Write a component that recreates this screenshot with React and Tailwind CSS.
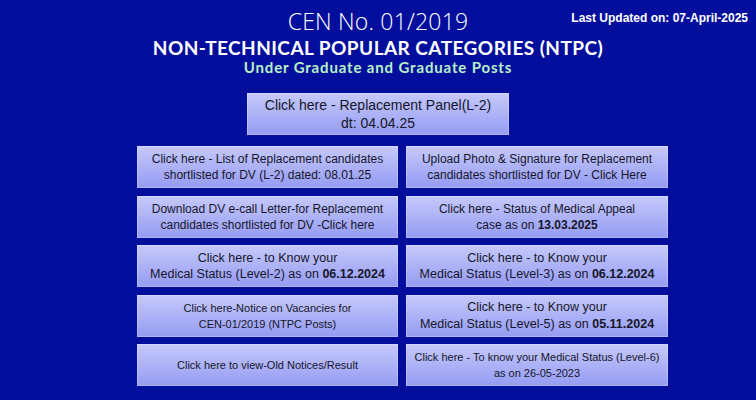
import React from "react";

const btn =
  "flex flex-col items-center justify-center text-center h-[42px] bg-gradient-to-b from-[#c6c9fb] to-[#959bf2] text-[#16162a] leading-[16px] shadow-[inset_0_0_0_1px_rgba(255,255,255,0.25)]";

export default function App() {
  return (
    <div
      className="relative w-[756px] h-[400px] overflow-hidden bg-[#030f9c]"
      style={{ fontFamily: '"Liberation Sans", Arial, sans-serif' }}
    >
      <div className="absolute right-[8px] top-[9px] text-[12px] font-bold text-white">
        Last Updated on: 07-April-2025
      </div>

      <div className="flex flex-col items-center pt-[7px]">
        <div
          className="text-[23px] font-light text-white leading-[28px] tracking-[0.2px]"
          style={{ fontFamily: '"Open Sans", sans-serif' }}
        >
          CEN No. 01/2019
        </div>
        <div
          className="text-[19px] font-bold text-white leading-[20px] mt-[2.5px] tracking-[0.45px]"
          style={{ fontFamily: 'Lato, sans-serif' }}
        >
          NON-TECHNICAL POPULAR CATEGORIES (NTPC)
        </div>
        <div
          className="text-[15px] font-bold text-[#b7f0c6] leading-[18px] mt-[0.5px] tracking-[0.85px]"
          style={{ fontFamily: 'Lato, sans-serif' }}
        >
          Under Graduate and Graduate Posts
        </div>
      </div>

      <div className={`${btn} mx-auto w-[262px] h-[41px] mt-[17px] text-[14px] leading-[18px]`}>
        <div>Click here - Replacement Panel(L-2)</div>
        <div>dt: 04.04.25</div>
      </div>

      <div className="ml-[137px] mt-[11px] grid grid-cols-[261px_262px] gap-x-[8px] gap-y-[7.5px]">
        <div className={`${btn} text-[12px]`}>
          <div>Click here - List of Replacement candidates</div>
          <div>shortlisted for DV (L-2) dated: 08.01.25</div>
        </div>
        <div className={`${btn} text-[12px]`}>
          <div>Upload Photo &amp; Signature for Replacement</div>
          <div>candidates shortlisted for DV - Click Here</div>
        </div>

        <div className={`${btn} text-[12px]`}>
          <div>Download DV e-call Letter-for Replacement</div>
          <div>candidates shortlisted for DV -Click here</div>
        </div>
        <div className={`${btn} text-[12px]`}>
          <div>Click here - Status of Medical Appeal</div>
          <div>
            case as on <b>13.03.2025</b>
          </div>
        </div>

        <div className={`${btn} text-[12.5px]`}>
          <div>Click here - to Know your</div>
          <div>
            Medical Status (Level-2) as on <b>06.12.2024</b>
          </div>
        </div>
        <div className={`${btn} text-[12.5px]`}>
          <div>Click here - to Know your</div>
          <div>
            Medical Status (Level-3) as on <b>06.12.2024</b>
          </div>
        </div>

        <div className={`${btn} text-[11px] leading-[15px]`}>
          <div>Click here-Notice on Vacancies for</div>
          <div>CEN-01/2019 (NTPC Posts)</div>
        </div>
        <div className={`${btn} text-[12.5px] leading-[17px]`}>
          <div>Click here - to Know your</div>
          <div>
            Medical Status (Level-5) as on <b>05.11.2024</b>
          </div>
        </div>

        <div className={`${btn} text-[11px]`}>
          <div>Click here to view-Old Notices/Result</div>
        </div>
        <div className={`${btn} text-[11px] leading-[15px]`}>
          <div>Click here - To know your Medical Status (Level-6)</div>
          <div>as on 26-05-2023</div>
        </div>
      </div>
    </div>
  );
}
